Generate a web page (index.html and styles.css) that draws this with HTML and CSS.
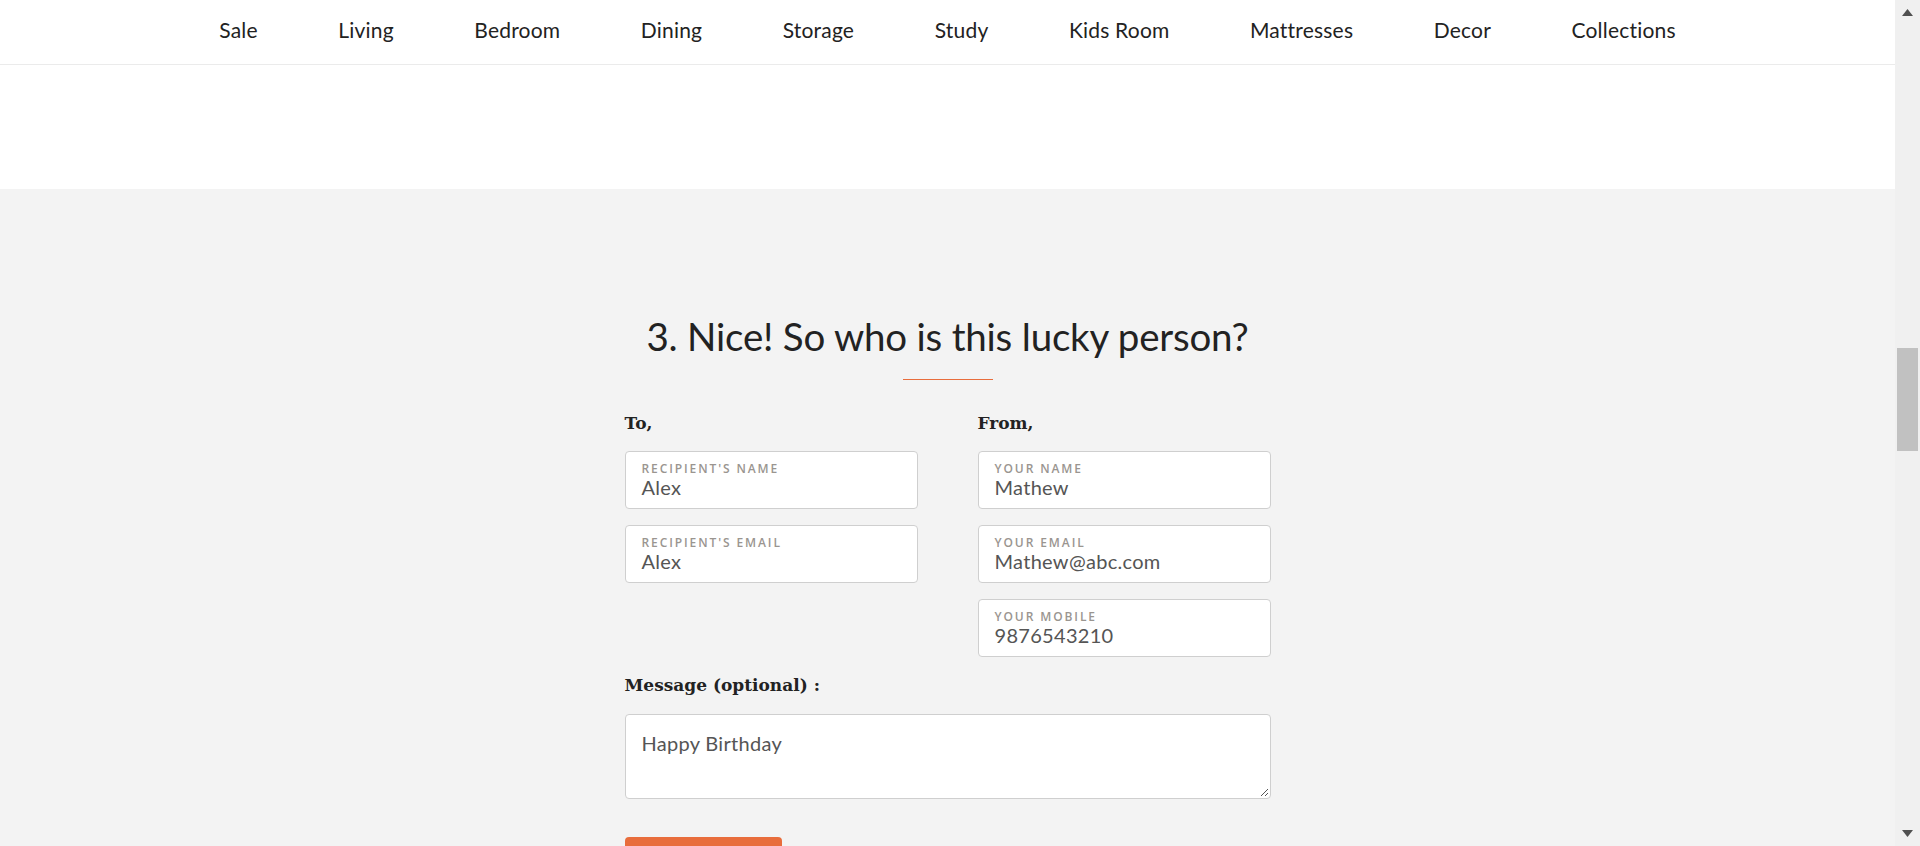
FILE: index.html
```html
<!DOCTYPE html>
<html lang="en">
<head>
<meta charset="utf-8">
<title>Gift Card - Who is this lucky person?</title>
<link rel="stylesheet" href="styles.css">
</head>
<body>
<div class="viewport">
  <div class="page">
    <header class="topnav">
      <nav class="menu">
        <a class="menu-item">Sale</a>
        <a class="menu-item">Living</a>
        <a class="menu-item">Bedroom</a>
        <a class="menu-item">Dining</a>
        <a class="menu-item">Storage</a>
        <a class="menu-item">Study</a>
        <a class="menu-item">Kids Room</a>
        <a class="menu-item">Mattresses</a>
        <a class="menu-item">Decor</a>
        <a class="menu-item">Collections</a>
      </nav>
    </header>
    <div class="banner-space"></div>
    <section class="gift">
      <h2 class="gift-title">3. Nice! So who is this lucky person?</h2>
      <div class="title-rule"></div>
      <div class="form">
        <div class="cols">
          <div class="col">
            <h4 class="group-label">To,</h4>
            <div class="field">
              <span class="field-label">RECIPIENT'S NAME</span>
              <span class="field-value">Alex</span>
            </div>
            <div class="field">
              <span class="field-label">RECIPIENT'S EMAIL</span>
              <span class="field-value">Alex</span>
            </div>
          </div>
          <div class="col">
            <h4 class="group-label">From,</h4>
            <div class="field">
              <span class="field-label">YOUR NAME</span>
              <span class="field-value">Mathew</span>
            </div>
            <div class="field">
              <span class="field-label">YOUR EMAIL</span>
              <span class="field-value">Mathew@abc.com</span>
            </div>
            <div class="field">
              <span class="field-label">YOUR MOBILE</span>
              <span class="field-value">9876543210</span>
            </div>
          </div>
        </div>
        <h4 class="group-label msg-label">Message (optional) :</h4>
        <div class="textarea">
          <span class="textarea-value">Happy Birthday</span>
          <svg class="resize-grip" width="10" height="10" viewBox="0 0 10 10"><path d="M9 2 L2 9 M9 6 L6 9" stroke="#555" stroke-width="1" fill="none"/></svg>
        </div>
        <div class="submit-row"><button class="submit" type="button"></button></div>
      </div>
    </section>
  </div>
  <div class="scrollbar">
    <div class="sb-arrow sb-up"><svg width="11" height="7" viewBox="0 0 11 7"><path d="M5.5 0 L11 7 L0 7 Z" fill="#505050"/></svg></div>
    <div class="sb-track"><div class="sb-thumb"></div></div>
    <div class="sb-arrow sb-down"><svg width="11" height="7" viewBox="0 0 11 7"><path d="M0 0 L11 0 L5.5 7 Z" fill="#505050"/></svg></div>
  </div>
</div>
</body>
</html>
```

FILE: styles.css
```css
* { box-sizing: border-box; }
html, body { margin: 0; padding: 0; height: 100%; overflow: hidden; }
body { font-family: "Lato", "Noto Sans", sans-serif; color: #222; background: #f3f3f3; }

.viewport { display: flex; height: 846px; width: 1920px; overflow: hidden; }
.page { flex: 1; min-width: 0; background: #f3f3f3; display: flex; flex-direction: column; }
.page > * { flex-shrink: 0; }

.topnav { height: 65px; background: #fff; border-bottom: 1px solid #ebebeb; display: flex; align-items: center; justify-content: center; }
.menu { display: flex; gap: 80.5px; align-items: center; padding-bottom: 6px; }
.menu-item { font-size: 21px; color: #222; text-decoration: none; letter-spacing: 0.2px; }

.banner-space { height: 124px; background: #fff; }

.gift { display: flex; flex-direction: column; align-items: center; padding-top: 124px; }
.gift-title { margin: 0; font-weight: 400; font-size: 38.5px; line-height: 46px; color: #222; letter-spacing: -0.2px; }
.title-rule { width: 90px; height: 1px; background: #e86d3c; margin-top: 20px; }

.form { width: 646px; margin-top: 31px; }
.cols { display: grid; grid-template-columns: 293px 293px; column-gap: 60px; }
.col { display: flex; flex-direction: column; gap: 16px; }
.group-label { margin: 0; font-family: "DejaVu Serif", "Liberation Serif", serif; font-weight: 700; font-size: 17px; line-height: 24px; color: #222; }

.field { height: 58px; background: #fff; border: 1px solid #cfcfcf; border-radius: 4px; padding: 10px 16px 0; display: flex; flex-direction: column; }
.field-label { font-family: "Open Sans", "Noto Sans", sans-serif; font-size: 12px; line-height: 14px; letter-spacing: 1.9px; color: #9a9590; font-weight: 600; }
.field-value { font-size: 20px; line-height: 22px; color: #555; letter-spacing: 0.3px; }

.msg-label { margin-top: 16px; }
.textarea { position: relative; margin-top: 17px; height: 85px; background: #fff; border: 1px solid #cfcfcf; border-radius: 4px; padding: 17px 16px; }
.textarea-value { font-size: 20px; line-height: 22px; color: #555; letter-spacing: 0.3px; }
.resize-grip { position: absolute; right: 1px; bottom: 1px; }

.submit-row { margin-top: 38px; }
.submit { width: 157px; height: 50px; border: none; border-radius: 4px; background: #e86d3c; }

.scrollbar { width: 25px; background: #f0f0f0; display: flex; flex-direction: column; }
.sb-arrow { height: 25px; display: flex; align-items: center; justify-content: center; }
.sb-track { flex: 1; padding-top: 323px; display: flex; justify-content: center; }
.sb-thumb { width: 21px; height: 103px; background: #c1c1c1; }
```
